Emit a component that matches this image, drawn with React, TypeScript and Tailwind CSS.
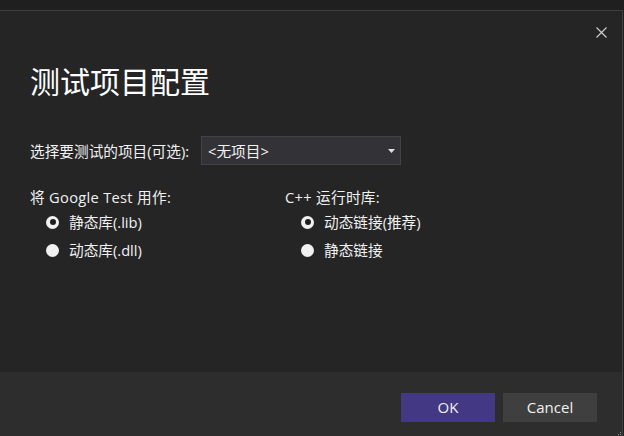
import { useState } from "react";

const font = { fontFamily: '"Open Sans", "Noto Sans CJK SC", sans-serif' };

function Radio({ checked, label, onClick }: { checked: boolean; label: string; onClick: () => void }) {
  return (
    <button type="button" onClick={onClick} className="flex items-center h-[28px] text-left">
      <span className="flex items-center justify-center w-[13px] h-[13px] rounded-full bg-[#f1f1f1]">
        {checked && <span className="w-[6px] h-[6px] rounded-full bg-[#1e1e1e]" />}
      </span>
      <span className="ml-[10px] text-[14.67px] text-[#f1f1f1]">{label}</span>
    </button>
  );
}

export default function App() {
  const [usage, setUsage] = useState("lib");
  const [runtime, setRuntime] = useState("dynamic");

  return (
    <div style={font} className="w-[624px] h-[436px] bg-[#1f1f1f] pt-[10px] overflow-hidden">
      <div className="w-[623px] h-[426px] bg-[#252526] border-t border-r border-[#3f3f3f] flex flex-col">
        <div className="flex-1 relative pl-[30px]">
          <button type="button" className="absolute right-[14px] top-[14px] w-[14px] h-[14px] flex items-center justify-center">
            <svg width="11" height="11" viewBox="0 0 11 11">
              <path d="M0.5 0.5 L10.5 10.5 M10.5 0.5 L0.5 10.5" stroke="#d0d0d0" strokeWidth="1.1" />
            </svg>
          </button>
          <h1 className="text-[30px] leading-[40px] text-white mt-[51px]">测试项目配置</h1>
          <div className="flex items-center mt-[34px]">
            <span className="text-[14.67px] text-[#f1f1f1]">选择要测试的项目(可选):</span>
            <div className="ml-[12px] w-[200px] h-[29px] bg-[#333337] border border-[#434346] flex items-center justify-between pl-[6px] pr-[5px]">
              <span className="text-[14.67px] text-[#f1f1f1]">&lt;无项目&gt;</span>
              <svg width="7" height="4" viewBox="0 0 7 4">
                <path d="M0 0 L7 0 L3.5 4 Z" fill="#e0e0e0" />
              </svg>
            </div>
          </div>
          <div className="flex mt-[22px]">
            <div className="w-[255px]">
              <div className="text-[14.67px] text-[#f1f1f1] leading-[20px] tracking-[0.3px]">将 Google Test 用作:</div>
              <div className="pl-[16px] flex flex-col mt-[1px]">
                <Radio checked={usage === "lib"} label="静态库(.lib)" onClick={() => setUsage("lib")} />
                <Radio checked={usage === "dll"} label="动态库(.dll)" onClick={() => setUsage("dll")} />
              </div>
            </div>
            <div>
              <div className="text-[14.67px] text-[#f1f1f1] leading-[20px] tracking-[0.3px]">C++ 运行时库:</div>
              <div className="pl-[16px] flex flex-col mt-[1px]">
                <Radio checked={runtime === "dynamic"} label="动态链接(推荐)" onClick={() => setRuntime("dynamic")} />
                <Radio checked={runtime === "static"} label="静态链接" onClick={() => setRuntime("static")} />
              </div>
            </div>
          </div>
        </div>
        <div className="h-[64px] bg-[#2d2d2d] flex items-start justify-end gap-[8px] pt-[21px] pr-[25px] relative">
          <button type="button" className="w-[94px] h-[29px] bg-[#433883] text-[15px] text-[#f1f1f1]">OK</button>
          <button type="button" className="w-[94px] h-[29px] bg-[#3f3f3f] text-[15px] text-[#f1f1f1]">Cancel</button>
          <div className="absolute right-[1px] bottom-[1px] grid grid-cols-3 gap-[1px]">
            <span />
            <span />
            <span className="w-[1px] h-[1px] bg-[#8a8a8a]" />
            <span />
            <span className="w-[1px] h-[1px] bg-[#8a8a8a]" />
            <span className="w-[1px] h-[1px] bg-[#8a8a8a]" />
          </div>
        </div>
      </div>
    </div>
  );
}
